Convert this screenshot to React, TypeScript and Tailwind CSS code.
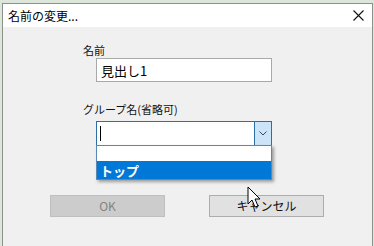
import React from "react";

const font = { fontFamily: '"Noto Sans CJK JP", "Noto Sans", sans-serif' };

function Cursor() {
  return (
    <svg
      className="absolute left-[247px] top-[186px]"
      width="14"
      height="24"
      viewBox="0 0 14 24"
    >
      <path
        d="M1 1 L1 18 L5 14 L8 21 L11 20 L8 13 L13 13 Z"
        fill="#fff"
        stroke="#000"
        strokeWidth="1"
        strokeLinejoin="round"
      />
    </svg>
  );
}

export default function App() {
  return (
    <div
      className="relative w-[374px] h-[246px] overflow-hidden bg-[#dde6da] pt-[3px] pl-[2px] pr-[1px]"
      style={font}
    >
      <div className="h-full border border-[#8c918c] border-b-0 flex flex-col bg-[#f0f0f0]">
        {/* title bar */}
        <div className="h-[23px] bg-white flex items-center justify-between pl-[5px] pr-[8px]">
          <span className="text-[12px] text-black leading-none">名前の変更...</span>
          <svg width="11" height="11" viewBox="0 0 11 11">
            <path d="M0.5 0.5 L10.5 10.5 M10.5 0.5 L0.5 10.5" stroke="#111" strokeWidth="1.1" />
          </svg>
        </div>

        {/* body */}
        <div className="flex-1 flex flex-col pt-[16px]">
          <div className="flex flex-col pl-[80px]">
            <span className="text-[11px] leading-[14px] text-[#111]">名前</span>
            <div className="ml-[13px] mt-[1px] w-[176px] h-[24px] bg-white border border-[#a9a9a9] flex items-center pl-[4px]">
              <span className="text-[13px] text-black leading-none">見出し1</span>
            </div>

            <span className="mt-[20px] text-[11px] leading-[14px] text-[#111]">グループ名(省略可)</span>
            <div className="relative ml-[13px] mt-[5px] w-[176px] h-[25px] bg-white border border-[#2c6fa8] flex">
              <div className="flex-1 flex items-center pl-[3px]">
                <span className="w-px h-[15px] bg-black" />
              </div>
              <div className="w-[17px] h-full bg-[#cce4f7] border-l border-[#2c6fa8] flex items-center justify-center">
                <svg width="8" height="5" viewBox="0 0 8 5">
                  <path d="M0.5 0.5 L4 4 L7.5 0.5" fill="none" stroke="#444" strokeWidth="1" />
                </svg>
              </div>

              <div className="absolute left-[-1px] top-[23px] w-[176px] bg-white border border-[#5b88b0] shadow-[2px_2px_3px_rgba(0,0,0,0.35)] z-10">
                <div className="h-[15px]" />
                <div className="h-[18px] bg-[#0078d7] flex items-center pl-[3px]">
                  <span className="text-[13px] leading-none text-white font-bold">トップ</span>
                </div>
              </div>
            </div>
          </div>

          <div className="flex pl-[47px] gap-[44px] mt-[49px]">
            <div className="w-[115px] h-[22px] bg-[#cccccc] border border-[#bfbfbf] flex items-center justify-center">
              <span className="text-[12px] text-[#838383] leading-none">OK</span>
            </div>
            <div className="w-[115px] h-[22px] bg-[#e1e1e1] border border-[#adadad] flex items-center justify-center">
              <span className="text-[12px] text-[#111] leading-none">キャンセル</span>
            </div>
          </div>
        </div>
      </div>
      <Cursor />
    </div>
  );
}
